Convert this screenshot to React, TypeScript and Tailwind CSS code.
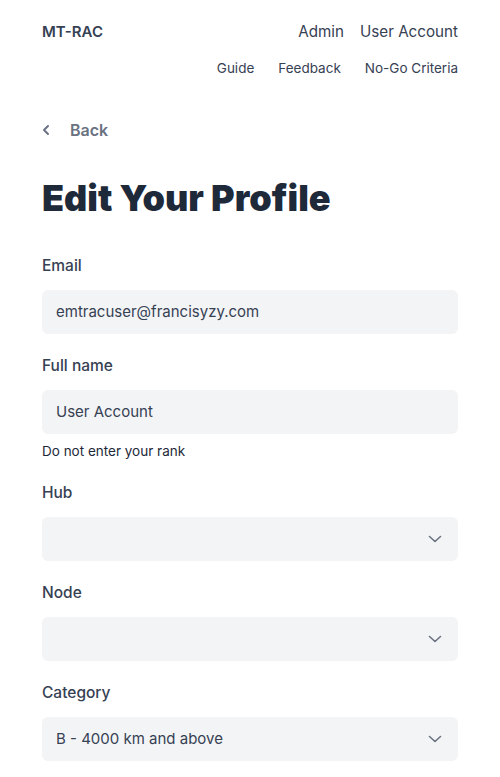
import React from "react";

function Chevron() {
  return (
    <svg width="14" height="8" viewBox="0 0 14 8" fill="none" className="text-gray-500">
      <path d="M1.5 1.5L7 6.5l5.5-5" stroke="currentColor" strokeWidth="1.6" strokeLinecap="round" strokeLinejoin="round" />
    </svg>
  );
}

function Field({ label, value, select, help }: { label: string; value: string; select?: boolean; help?: string }) {
  return (
    <div className="flex flex-col">
      <label className="text-[15.5px] leading-6 font-medium text-gray-700">{label}</label>
      <div className="mt-3 h-11 rounded-md bg-gray-100 flex items-center justify-between pl-3.5 pr-4">
        <span className="text-[15px] text-gray-700">{value}</span>
        {select && <Chevron />}
      </div>
      {help && <p className="mt-[7px] text-[13.5px] leading-5 text-gray-800">{help}</p>}
    </div>
  );
}

export default function App() {
  return (
    <div className="min-h-screen bg-white px-[42px] pt-5" style={{ fontFamily: "Inter, 'Noto Sans', sans-serif" }}>
      <header className="flex justify-between">
        <div className="text-[15px] leading-6 font-semibold text-gray-700">MT-RAC</div>
        <div className="flex flex-col items-end">
          <div className="flex gap-4 text-[15.2px] leading-6 text-gray-700">
            <span>Admin</span>
            <span>User Account</span>
          </div>
          <div className="mt-3.5 flex gap-6 text-[13.5px] leading-5 text-gray-700">
            <span>Guide</span>
            <span>Feedback</span>
            <span>No-Go Criteria</span>
          </div>
        </div>
      </header>
      <div className="mt-10 flex items-center gap-5 text-gray-500">
        <svg width="8" height="12" viewBox="0 0 8 12" fill="none">
          <path d="M6 2L2 6l4 4" stroke="currentColor" strokeWidth="2" strokeLinecap="round" strokeLinejoin="round" />
        </svg>
        <span className="text-base leading-6 font-semibold">Back</span>
      </div>
      <h1 className="mt-9 text-4xl leading-10 font-black text-gray-800">Edit Your Profile</h1>
      <div className="mt-9 flex flex-col gap-5">
        <Field label="Email" value="emtracuser@francisyzy.com" />
        <Field label="Full name" value="User Account" help="Do not enter your rank" />
        <Field label="Hub" value="" select />
        <Field label="Node" value="" select />
        <Field label="Category" value="B - 4000 km and above" select />
      </div>
    </div>
  );
}
